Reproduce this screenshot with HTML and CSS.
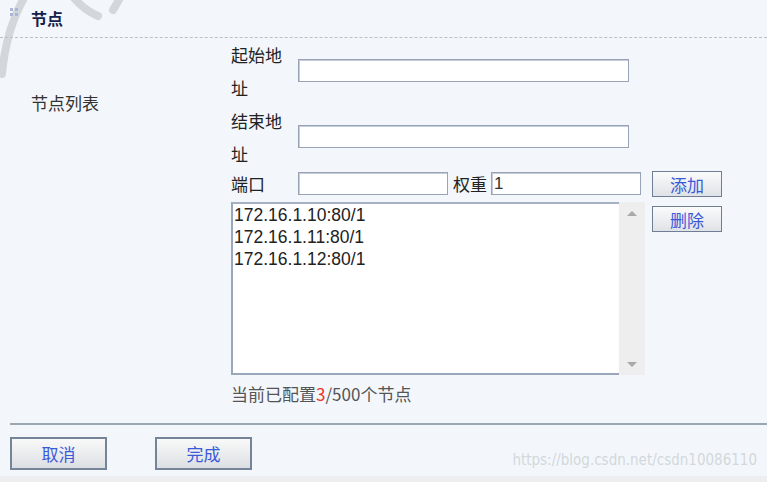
FILE: index.html
```html
<!DOCTYPE html>
<html lang="zh-CN">
<head>
    <meta charset="UTF-8">
    <title>节点</title>
    <link rel="stylesheet" href="styles.css">
</head>
<body>

<div class="page">
    <!--左上角水印残影-->
    <svg class="mark" width="130" height="80" viewBox="0 0 130 80">
        <path d="M2 74 Q6 30 24 -2" />
        <path d="M74 -2 Q84 10 98 16" />
        <path d="M120 -2 L113 10" />
    </svg>

    <div class="head">
        <span class="dots"><i></i><i></i><i></i><i></i></span>
        <span class="title">节点</span>
    </div>

    <div class="form">
        <div class="side">节点列表</div>

        <div class="main">
            <div class="row">
                <label class="lbl">起始地址</label>
                <input class="txt wide" type="text">
            </div>
            <div class="row">
                <label class="lbl">结束地址</label>
                <input class="txt wide" type="text">
            </div>
            <div class="row short">
                <label class="lbl">端口</label>
                <input class="txt half" type="text">
                <label class="lbl2">权重</label>
                <input class="txt half" type="text" value="1">
                <button class="btn">添加</button>
            </div>
            <div class="row listrow">
                <div class="list">
                    <div class="items">
                        <div>172.16.1.10:80/1</div>
                        <div>172.16.1.11:80/1</div>
                        <div>172.16.1.12:80/1</div>
                    </div>
                    <div class="bar">
                        <span class="up"></span>
                        <span class="down"></span>
                    </div>
                </div>
                <button class="btn">删除</button>
            </div>
            <p class="count">当前已配置<em>3</em>/500个节点</p>
        </div>
    </div>

    <div class="foot">
        <button class="big">取消</button>
        <button class="big">完成</button>
        <span class="wm">https://blog.csdn.net/csdn10086110</span>
    </div>
</div>

</body>
</html>
```

FILE: styles.css
```css
* {
    margin: 0;
    padding: 0;
    box-sizing: border-box;
}

html, body {
    height: 100%;
    background: #f3f7fb;
}

body {
    font-family: "Noto Sans CJK SC", "Liberation Sans", sans-serif;
    font-size: 17px;
    color: #333;
}

.page {
    position: relative;
    height: 100%;
    border-bottom: 6px solid #eceef0;
}

/* watermark strokes */
.mark {
    position: absolute;
    top: 0;
    left: 0;
}
.mark path {
    fill: none;
    stroke: #d3d7dc;
    stroke-width: 8;
    stroke-linecap: round;
}

.head {
    position: relative;
    display: flex;
    align-items: center;
    height: 38px;
    padding: 0 0 2px 10px;
    border-bottom: 1px dashed #b9c0c7;
}
.dots {
    display: grid;
    grid-template-columns: 3px 3px;
    gap: 2px;
    margin-right: 13px;
    margin-top: -12px;
}
.dots i {
    width: 3px;
    height: 3px;
    background: #aab6d6;
}
.title {
    font-weight: bold;
    font-size: 16px;
    color: #15214d;
}

.form {
    display: flex;
}
.side {
    width: 231px;
    padding: 52px 0 0 31px;
    color: #333;
}
.main {
    display: flex;
    flex-direction: column;
}

.row {
    display: flex;
    align-items: center;
}
.lbl {
    flex: none;
    width: 67px;
    line-height: 33px;
    color: #222;
}
.row.short {
    height: 31px;
    margin-top: -2px;
}
.row.short .lbl {
    line-height: 22px;
}
.lbl2 {
    margin: 0 4px 0 5px;
    color: #222;
}

.txt {
    height: 23px;
    background: #fff;
    border: 1px solid #98a4b6;
    box-shadow: inset 1px 1px 0 #c4ccd8;
    padding: 0 2px;
    font-family: "Liberation Sans", sans-serif;
    font-size: 17px;
    color: #333;
    outline: none;
}
.txt.wide {
    width: 331px;
    margin-top: -2px;
}
.txt.half {
    width: 150px;
}

.btn {
    width: 70px;
    height: 26px;
    margin-left: 11px;
    border: 1px solid #6f7d95;
    background: linear-gradient(#fbfbfb, #dfe2e6);
    font-family: "Noto Sans CJK SC", sans-serif;
    font-size: 17px;
    color: #3a5ad8;
}

.listrow {
    align-items: flex-start;
    margin-top: 3px;
}
.listrow .btn {
    margin-left: 7px;
    margin-top: 4px;
}
.list {
    display: flex;
    width: 414px;
    height: 173px;
}
.items {
    flex: 1;
    background: #fff;
    border: 2px solid #9aa6ba;
    border-right: none;
    border-top-color: #a6b2c4;
    padding: 0 0 0 1px;
    font-family: "Liberation Sans", sans-serif;
    font-size: 17.5px;
    line-height: 22px;
    color: #222;
}
.bar {
    width: 26px;
    display: flex;
    flex-direction: column;
    justify-content: space-between;
    align-items: center;
    padding: 9px 0 8px;
    background: #eeeeee;
}
.up, .down {
    width: 0;
    height: 0;
    border-left: 5px solid transparent;
    border-right: 5px solid transparent;
}
.up {
    border-bottom: 5px solid #a8a8a8;
}
.down {
    border-top: 5px solid #a8a8a8;
}

.count {
    margin-top: 6px;
    color: #555;
}
.count em {
    font-style: normal;
    color: #f0302a;
}

.foot {
    display: flex;
    align-items: center;
    margin: 17px 0 0 10px;
    padding-top: 12px;
    border-top: 2px solid #9aa6b4;
}
.big {
    width: 97px;
    height: 33px;
    margin-right: 48px;
    border: 2px solid #76849a;
    background: linear-gradient(#f9f9f9, #dcdfe3);
    font-family: "Noto Sans CJK SC", sans-serif;
    font-size: 17px;
    color: #3a5ad8;
}
.wm {
    margin: 12px 10px 0 auto;
    font-family: "Liberation Sans Narrow", "DejaVu Sans Condensed", sans-serif;
    font-size: 15px;
    color: #d2d7dc;
}
```
